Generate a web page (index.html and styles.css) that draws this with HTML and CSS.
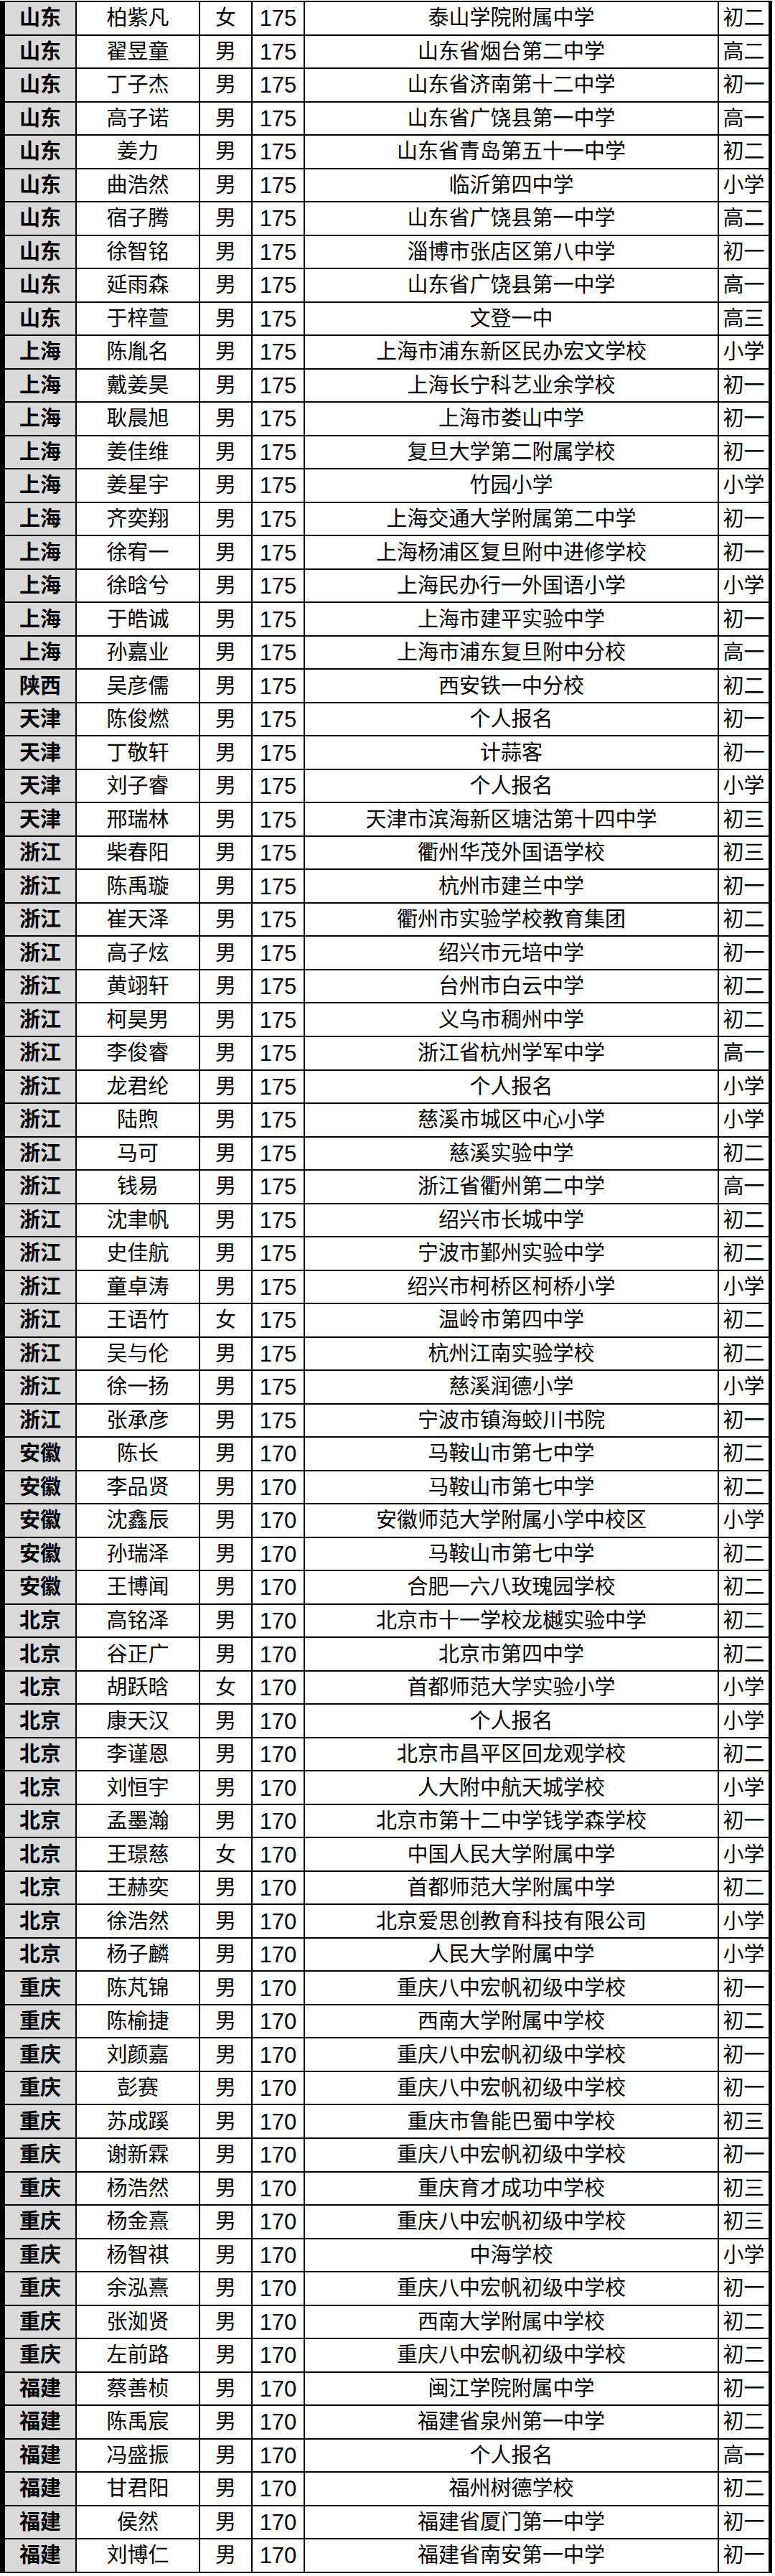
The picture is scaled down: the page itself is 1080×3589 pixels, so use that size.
FILE: index.html
```html
<!DOCTYPE html>
<html lang="zh-CN">
<head>
<meta charset="utf-8">
<title>名单</title>
<link rel="stylesheet" href="styles.css">
</head>
<body>
<div class="sheet">
<div class="row"><span class="prov">山东</span><span>柏紫凡</span><span>女</span><span class="num">175</span><span>泰山学院附属中学</span><span>初二</span></div>
<div class="row"><span class="prov">山东</span><span>翟昱童</span><span>男</span><span class="num">175</span><span>山东省烟台第二中学</span><span>高二</span></div>
<div class="row"><span class="prov">山东</span><span>丁子杰</span><span>男</span><span class="num">175</span><span>山东省济南第十二中学</span><span>初一</span></div>
<div class="row"><span class="prov">山东</span><span>高子诺</span><span>男</span><span class="num">175</span><span>山东省广饶县第一中学</span><span>高一</span></div>
<div class="row"><span class="prov">山东</span><span>姜力</span><span>男</span><span class="num">175</span><span>山东省青岛第五十一中学</span><span>初二</span></div>
<div class="row"><span class="prov">山东</span><span>曲浩然</span><span>男</span><span class="num">175</span><span>临沂第四中学</span><span>小学</span></div>
<div class="row"><span class="prov">山东</span><span>宿子腾</span><span>男</span><span class="num">175</span><span>山东省广饶县第一中学</span><span>高二</span></div>
<div class="row"><span class="prov">山东</span><span>徐智铭</span><span>男</span><span class="num">175</span><span>淄博市张店区第八中学</span><span>初一</span></div>
<div class="row"><span class="prov">山东</span><span>延雨森</span><span>男</span><span class="num">175</span><span>山东省广饶县第一中学</span><span>高一</span></div>
<div class="row"><span class="prov">山东</span><span>于梓萱</span><span>男</span><span class="num">175</span><span>文登一中</span><span>高三</span></div>
<div class="row"><span class="prov">上海</span><span>陈胤名</span><span>男</span><span class="num">175</span><span>上海市浦东新区民办宏文学校</span><span>小学</span></div>
<div class="row"><span class="prov">上海</span><span>戴姜昊</span><span>男</span><span class="num">175</span><span>上海长宁科艺业余学校</span><span>初一</span></div>
<div class="row"><span class="prov">上海</span><span>耿晨旭</span><span>男</span><span class="num">175</span><span>上海市娄山中学</span><span>初一</span></div>
<div class="row"><span class="prov">上海</span><span>姜佳维</span><span>男</span><span class="num">175</span><span>复旦大学第二附属学校</span><span>初一</span></div>
<div class="row"><span class="prov">上海</span><span>姜星宇</span><span>男</span><span class="num">175</span><span>竹园小学</span><span>小学</span></div>
<div class="row"><span class="prov">上海</span><span>齐奕翔</span><span>男</span><span class="num">175</span><span>上海交通大学附属第二中学</span><span>初一</span></div>
<div class="row"><span class="prov">上海</span><span>徐宥一</span><span>男</span><span class="num">175</span><span>上海杨浦区复旦附中进修学校</span><span>初一</span></div>
<div class="row"><span class="prov">上海</span><span>徐晗兮</span><span>男</span><span class="num">175</span><span>上海民办行一外国语小学</span><span>小学</span></div>
<div class="row"><span class="prov">上海</span><span>于皓诚</span><span>男</span><span class="num">175</span><span>上海市建平实验中学</span><span>初一</span></div>
<div class="row"><span class="prov">上海</span><span>孙嘉业</span><span>男</span><span class="num">175</span><span>上海市浦东复旦附中分校</span><span>高一</span></div>
<div class="row"><span class="prov">陕西</span><span>吴彦儒</span><span>男</span><span class="num">175</span><span>西安铁一中分校</span><span>初二</span></div>
<div class="row"><span class="prov">天津</span><span>陈俊燃</span><span>男</span><span class="num">175</span><span>个人报名</span><span>初一</span></div>
<div class="row"><span class="prov">天津</span><span>丁敬轩</span><span>男</span><span class="num">175</span><span>计蒜客</span><span>初一</span></div>
<div class="row"><span class="prov">天津</span><span>刘子睿</span><span>男</span><span class="num">175</span><span>个人报名</span><span>小学</span></div>
<div class="row"><span class="prov">天津</span><span>邢瑞林</span><span>男</span><span class="num">175</span><span>天津市滨海新区塘沽第十四中学</span><span>初三</span></div>
<div class="row"><span class="prov">浙江</span><span>柴春阳</span><span>男</span><span class="num">175</span><span>衢州华茂外国语学校</span><span>初三</span></div>
<div class="row"><span class="prov">浙江</span><span>陈禹璇</span><span>男</span><span class="num">175</span><span>杭州市建兰中学</span><span>初一</span></div>
<div class="row"><span class="prov">浙江</span><span>崔天泽</span><span>男</span><span class="num">175</span><span>衢州市实验学校教育集团</span><span>初二</span></div>
<div class="row"><span class="prov">浙江</span><span>高子炫</span><span>男</span><span class="num">175</span><span>绍兴市元培中学</span><span>初一</span></div>
<div class="row"><span class="prov">浙江</span><span>黄翊轩</span><span>男</span><span class="num">175</span><span>台州市白云中学</span><span>初二</span></div>
<div class="row"><span class="prov">浙江</span><span>柯昊男</span><span>男</span><span class="num">175</span><span>义乌市稠州中学</span><span>初二</span></div>
<div class="row"><span class="prov">浙江</span><span>李俊睿</span><span>男</span><span class="num">175</span><span>浙江省杭州学军中学</span><span>高一</span></div>
<div class="row"><span class="prov">浙江</span><span>龙君纶</span><span>男</span><span class="num">175</span><span>个人报名</span><span>小学</span></div>
<div class="row"><span class="prov">浙江</span><span>陆煦</span><span>男</span><span class="num">175</span><span>慈溪市城区中心小学</span><span>小学</span></div>
<div class="row"><span class="prov">浙江</span><span>马可</span><span>男</span><span class="num">175</span><span>慈溪实验中学</span><span>初二</span></div>
<div class="row"><span class="prov">浙江</span><span>钱易</span><span>男</span><span class="num">175</span><span>浙江省衢州第二中学</span><span>高一</span></div>
<div class="row"><span class="prov">浙江</span><span>沈聿帆</span><span>男</span><span class="num">175</span><span>绍兴市长城中学</span><span>初二</span></div>
<div class="row"><span class="prov">浙江</span><span>史佳航</span><span>男</span><span class="num">175</span><span>宁波市鄞州实验中学</span><span>初二</span></div>
<div class="row"><span class="prov">浙江</span><span>童卓涛</span><span>男</span><span class="num">175</span><span>绍兴市柯桥区柯桥小学</span><span>小学</span></div>
<div class="row"><span class="prov">浙江</span><span>王语竹</span><span>女</span><span class="num">175</span><span>温岭市第四中学</span><span>初二</span></div>
<div class="row"><span class="prov">浙江</span><span>吴与伦</span><span>男</span><span class="num">175</span><span>杭州江南实验学校</span><span>初二</span></div>
<div class="row"><span class="prov">浙江</span><span>徐一扬</span><span>男</span><span class="num">175</span><span>慈溪润德小学</span><span>小学</span></div>
<div class="row"><span class="prov">浙江</span><span>张承彦</span><span>男</span><span class="num">175</span><span>宁波市镇海蛟川书院</span><span>初一</span></div>
<div class="row"><span class="prov">安徽</span><span>陈长</span><span>男</span><span class="num">170</span><span>马鞍山市第七中学</span><span>初二</span></div>
<div class="row"><span class="prov">安徽</span><span>李品贤</span><span>男</span><span class="num">170</span><span>马鞍山市第七中学</span><span>初二</span></div>
<div class="row"><span class="prov">安徽</span><span>沈鑫辰</span><span>男</span><span class="num">170</span><span>安徽师范大学附属小学中校区</span><span>小学</span></div>
<div class="row"><span class="prov">安徽</span><span>孙瑞泽</span><span>男</span><span class="num">170</span><span>马鞍山市第七中学</span><span>初二</span></div>
<div class="row"><span class="prov">安徽</span><span>王博闻</span><span>男</span><span class="num">170</span><span>合肥一六八玫瑰园学校</span><span>初二</span></div>
<div class="row"><span class="prov">北京</span><span>高铭泽</span><span>男</span><span class="num">170</span><span>北京市十一学校龙樾实验中学</span><span>初二</span></div>
<div class="row"><span class="prov">北京</span><span>谷正广</span><span>男</span><span class="num">170</span><span>北京市第四中学</span><span>初二</span></div>
<div class="row"><span class="prov">北京</span><span>胡跃晗</span><span>女</span><span class="num">170</span><span>首都师范大学实验小学</span><span>小学</span></div>
<div class="row"><span class="prov">北京</span><span>康天汉</span><span>男</span><span class="num">170</span><span>个人报名</span><span>小学</span></div>
<div class="row"><span class="prov">北京</span><span>李谨恩</span><span>男</span><span class="num">170</span><span>北京市昌平区回龙观学校</span><span>初二</span></div>
<div class="row"><span class="prov">北京</span><span>刘恒宇</span><span>男</span><span class="num">170</span><span>人大附中航天城学校</span><span>小学</span></div>
<div class="row"><span class="prov">北京</span><span>孟墨瀚</span><span>男</span><span class="num">170</span><span>北京市第十二中学钱学森学校</span><span>初一</span></div>
<div class="row"><span class="prov">北京</span><span>王璟慈</span><span>女</span><span class="num">170</span><span>中国人民大学附属中学</span><span>小学</span></div>
<div class="row"><span class="prov">北京</span><span>王赫奕</span><span>男</span><span class="num">170</span><span>首都师范大学附属中学</span><span>初二</span></div>
<div class="row"><span class="prov">北京</span><span>徐浩然</span><span>男</span><span class="num">170</span><span>北京爱思创教育科技有限公司</span><span>小学</span></div>
<div class="row"><span class="prov">北京</span><span>杨子麟</span><span>男</span><span class="num">170</span><span>人民大学附属中学</span><span>小学</span></div>
<div class="row"><span class="prov">重庆</span><span>陈芃锦</span><span>男</span><span class="num">170</span><span>重庆八中宏帆初级中学校</span><span>初一</span></div>
<div class="row"><span class="prov">重庆</span><span>陈榆捷</span><span>男</span><span class="num">170</span><span>西南大学附属中学校</span><span>初二</span></div>
<div class="row"><span class="prov">重庆</span><span>刘颜嘉</span><span>男</span><span class="num">170</span><span>重庆八中宏帆初级中学校</span><span>初一</span></div>
<div class="row"><span class="prov">重庆</span><span>彭赛</span><span>男</span><span class="num">170</span><span>重庆八中宏帆初级中学校</span><span>初一</span></div>
<div class="row"><span class="prov">重庆</span><span>苏成蹊</span><span>男</span><span class="num">170</span><span>重庆市鲁能巴蜀中学校</span><span>初三</span></div>
<div class="row"><span class="prov">重庆</span><span>谢新霖</span><span>男</span><span class="num">170</span><span>重庆八中宏帆初级中学校</span><span>初一</span></div>
<div class="row"><span class="prov">重庆</span><span>杨浩然</span><span>男</span><span class="num">170</span><span>重庆育才成功中学校</span><span>初三</span></div>
<div class="row"><span class="prov">重庆</span><span>杨金熹</span><span>男</span><span class="num">170</span><span>重庆八中宏帆初级中学校</span><span>初三</span></div>
<div class="row"><span class="prov">重庆</span><span>杨智祺</span><span>男</span><span class="num">170</span><span>中海学校</span><span>小学</span></div>
<div class="row"><span class="prov">重庆</span><span>余泓熹</span><span>男</span><span class="num">170</span><span>重庆八中宏帆初级中学校</span><span>初一</span></div>
<div class="row"><span class="prov">重庆</span><span>张洳贤</span><span>男</span><span class="num">170</span><span>西南大学附属中学校</span><span>初二</span></div>
<div class="row"><span class="prov">重庆</span><span>左前路</span><span>男</span><span class="num">170</span><span>重庆八中宏帆初级中学校</span><span>初二</span></div>
<div class="row"><span class="prov">福建</span><span>蔡善桢</span><span>男</span><span class="num">170</span><span>闽江学院附属中学</span><span>初一</span></div>
<div class="row"><span class="prov">福建</span><span>陈禹宸</span><span>男</span><span class="num">170</span><span>福建省泉州第一中学</span><span>初二</span></div>
<div class="row"><span class="prov">福建</span><span>冯盛振</span><span>男</span><span class="num">170</span><span>个人报名</span><span>高一</span></div>
<div class="row"><span class="prov">福建</span><span>甘君阳</span><span>男</span><span class="num">170</span><span>福州树德学校</span><span>初二</span></div>
<div class="row"><span class="prov">福建</span><span>侯然</span><span>男</span><span class="num">170</span><span>福建省厦门第一中学</span><span>初一</span></div>
<div class="row"><span class="prov">福建</span><span>刘博仁</span><span>男</span><span class="num">170</span><span>福建省南安第一中学</span><span>初一</span></div>
</div>
</body>
</html>
```

FILE: styles.css
```css
html, body {
  margin: 0;
  padding: 0;
  background: #ffffff;
}

body {
  font-family: "Liberation Sans", "Noto Sans CJK SC", sans-serif;
  font-size: 29px;
  color: #000000;
}

.sheet {
  box-sizing: border-box;
  width: 1076px;
  margin-top: 1px;
  border-left: 7px solid #000000;
  border-right: 5px solid #000000;
  border-top: 2px solid #000000;
}

.row {
  display: grid;
  grid-template-columns: 100px 172px 73px 73px 577px 1fr;
  height: 46.52px;
}

.row > span {
  box-sizing: border-box;
  display: flex;
  align-items: center;
  justify-content: center;
  border-right: 2px solid #000000;
  border-bottom: 2px solid #000000;
  white-space: nowrap;
  overflow: hidden;
  padding-top: 1px;
  line-height: 1;
}

.row > span:last-child {
  border-right: none;
}

.row > .prov {
  background: #d9d9d9;
  font-weight: 600;
}

.row > .num {
  font-size: 31px;
}
```
